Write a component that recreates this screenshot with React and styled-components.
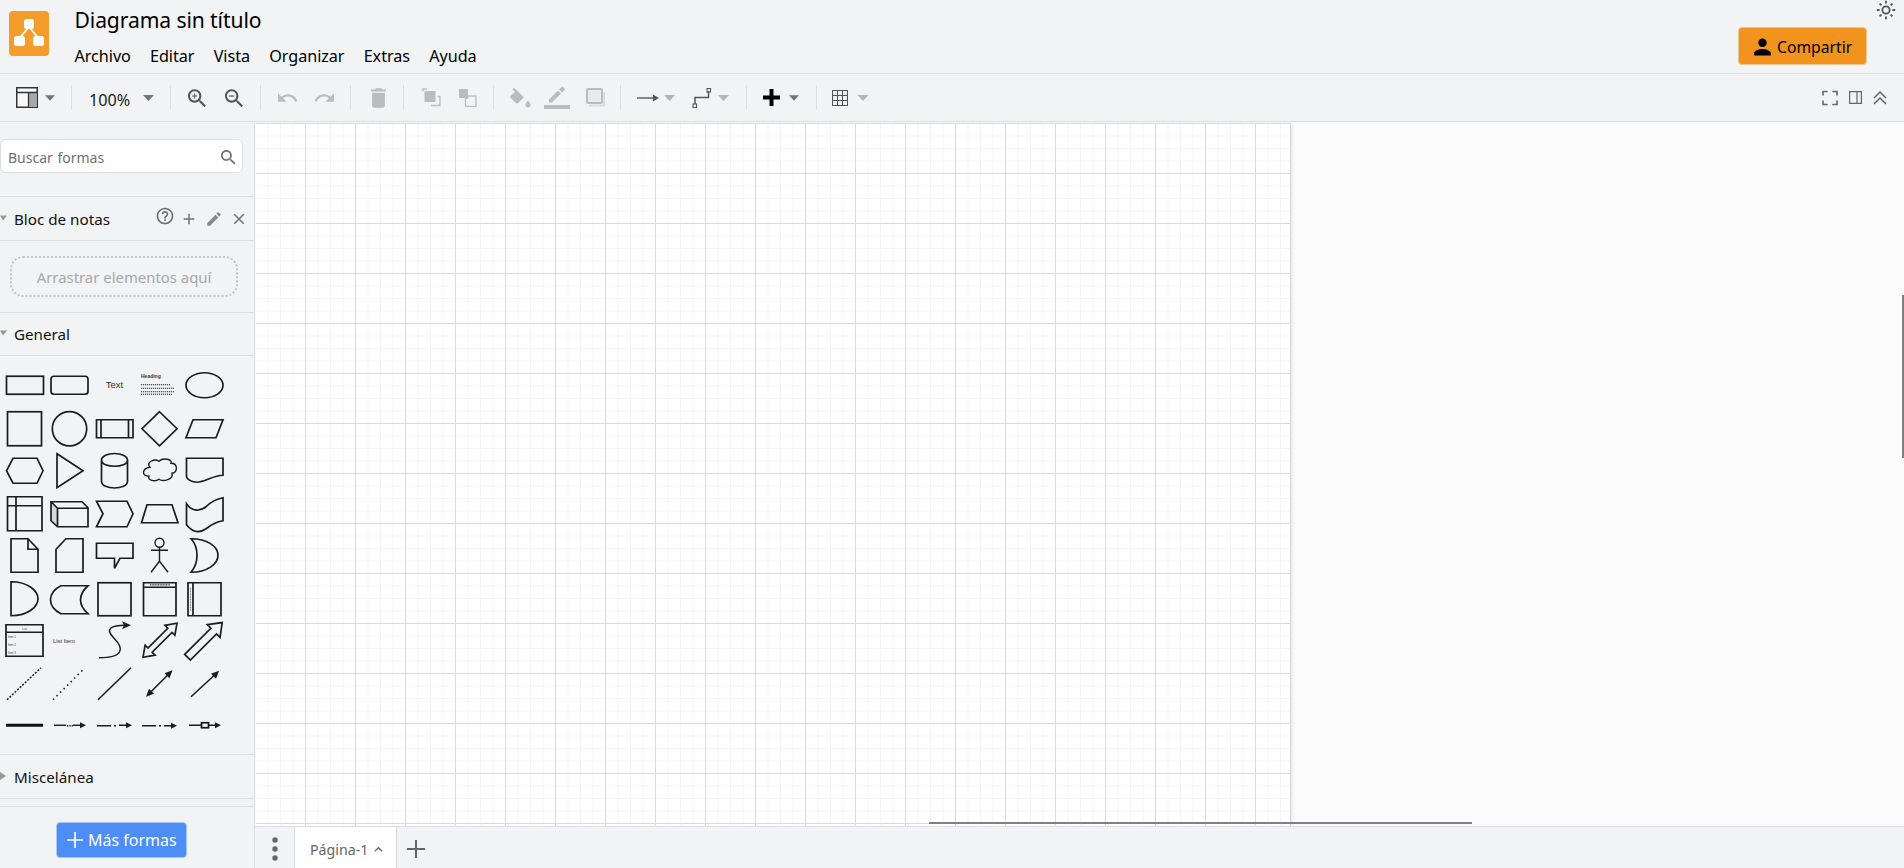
import React from "react";
import styled, { createGlobalStyle } from "styled-components";

const Global = createGlobalStyle`
  html, body { margin: 0; padding: 0; height: 100%; overflow: hidden; }
  body { font-family: "Noto Sans", "Open Sans", sans-serif; color: #000; background: #f1f3f4; }
  #root { height: 100%; }
`;

const Shell = styled.div`display: flex; flex-direction: column; height: 868px; width: 1904px; overflow: hidden; position: relative;`;

/* header */
const Header = styled.header`
  height: 73px; flex: none; display: flex; background: #f1f3f4; border-bottom: 1px solid #dadce0; position: relative; box-sizing: content-box;
`;
const LogoWrap = styled.div`margin: 11px 0 0 9px; width: 40px; height: 45px; flex: none;`;
const TitleCol = styled.div`margin-left: 25.5px; display: flex; flex-direction: column;`;
const Title = styled.div`font-size: 21.1px; line-height: 30px; margin-top: 5px; letter-spacing: -0.1px;`;
const Menu = styled.nav`display: flex; gap: 19.2px; margin-top: 6px;`;
const MenuItem = styled.span`font-size: 16.2px; line-height: 30px; letter-spacing: -0.05px;`;
const HeaderRight = styled.div`margin-left: auto; margin-right: 37px; margin-top: 27px;`;
const ShareButton = styled.button`
  width: 129px; height: 38px; box-sizing: border-box; background: #f2931e; border: 1px solid #e8c79b; border-radius: 4px;
  display: flex; align-items: center; padding: 1px 0 0 14px; gap: 5px; font: inherit; font-size: 15.7px; color: #000; white-space: nowrap;
`;
const ThemeToggle = styled.svg`position: absolute; right: 7px; top: -1px; width: 22px; height: 22px;`;

/* toolbar */
const Toolbar = styled.div`
  height: 47px; flex: none; display: flex; align-items: center; padding-left: 16px; background: #f1f3f4; border-bottom: 1px solid #dadce0;
`;
const Glyph = styled.svg`
  flex: none; width: ${p => p.$w}px; height: ${p => p.$h || p.$w}px; margin-left: ${p => p.$ml || 0}px;
  color: ${p => p.$off ? "#bcbcbc" : p.$c || "#555"}; display: block;
`;
const Sep = styled.span`flex: none; width: 1px; height: 25px; background: #dedfe2; margin-left: ${p => p.$ml}px;`;
const Zoom = styled.span`flex: none; width: 41px; margin-left: ${p => p.$ml}px; font-size: 16.2px; line-height: 24px; position: relative; top: 2px; color: #222; white-space: nowrap;`;

/* body */
const Body = styled.div`flex: 1; display: flex; min-height: 0;`;
const Sidebar = styled.aside`width: 255px; flex: none; box-sizing: border-box; border-right: 1px solid #dadce0; background: #f1f3f4; display: flex; flex-direction: column;`;
const SearchArea = styled.div`height: 75px; flex: none; box-sizing: border-box; padding-top: 17px; border-bottom: 1px solid #dadce0;`;
const SearchBox = styled.div`
  width: 243px; height: 34px; box-sizing: border-box; background: #fff; border: 1px solid #dadce0; border-radius: 5px;
  display: flex; align-items: center; justify-content: space-between; padding: 2px 6px 0 7px; font-size: 14px; color: #707070; word-spacing: 1px;
`;
const SectionHead = styled.div`
  height: ${p => p.$h}px; flex: none; box-sizing: border-box; border-bottom: 1px solid #dadce0; display: flex; align-items: center; position: relative; padding-left: 14px;
  font-size: 15.2px; color: #111;
`;
const Caret = styled.svg`position: absolute; left: 0; top: 50%; margin-top: -5px; width: 8px; height: 8px; color: #999;`;
const HeadIcons = styled.div`position: absolute; left: 0; top: 0; right: 0; bottom: 0; pointer-events: none;`;
const HeadIcon = styled.svg`position: absolute; left: ${p => p.$x}px; top: ${p => p.$y}px; width: ${p => p.$s}px; height: ${p => p.$s}px; color: ${p => p.$c || "#707070"};`;
const DropArea = styled.div`height: 72px; flex: none; box-sizing: border-box; padding: 15px 16px 0 10px; border-bottom: 1px solid #dadce0;`;
const DropBox = styled.div`
  height: 41px; box-sizing: border-box; border: 2px dotted #c4c4c4; border-radius: 13px; display: flex; align-items: center; justify-content: center;
  font-size: 14.9px; color: #a8a8a8;
`;
const Palette = styled.div`
  height: 399px; flex: none; box-sizing: border-box; border-bottom: 1px solid #dadce0; padding: 8px 0 0 2px;
  display: grid; grid-template-columns: repeat(5, 45px); grid-auto-rows: 42.5px;
`;
const CellSvg = styled.svg`width: 45px; height: 42.5px; display: block; overflow: visible;`;
const Spacer = styled.div`height: 8px; flex: none; box-sizing: border-box; border-bottom: 1px solid #dadce0;`;
const SideFooter = styled.div`flex: 1; padding: 15px 0 0 56px;`;
const MoreButton = styled.button`
  width: 131px; height: 36px; box-sizing: border-box; border: 1px solid #a9c6f5; background: #4d8df6; color: #fff; border-radius: 4px;
  display: flex; align-items: center; padding: 0 0 0 10px; gap: 5px; font: inherit; font-size: 16px; white-space: nowrap;
`;

/* canvas */
const Main = styled.main`flex: 1; min-width: 0; display: flex; flex-direction: column;`;
const Canvas = styled.div`flex: 1; min-height: 0; background: #fbfbfb; position: relative; overflow: hidden; padding: 1px 0 0 1px;`;
const Page = styled.div`
  width: 1034px; height: 100%; background-color: #fff; box-shadow: 1px 0 0 #d8d8d8, 3px 0 2px #ececec;
  background-image:
    linear-gradient(to right, #dbdbdb 1px, transparent 1px),
    linear-gradient(to bottom, #dbdbdb 1px, transparent 1px),
    linear-gradient(to right, #f4f4f4 1px, transparent 1px),
    linear-gradient(to bottom, #f4f4f4 1px, transparent 1px);
  background-size: 50px 50px, 50px 50px, 12.5px 12.5px, 12.5px 12.5px;
  background-position: 49px 0, 0 50px, 11.5px 0, 0 0;
`;
const HScroll = styled.div`position: absolute; left: 674px; width: 543px; bottom: 2px; height: 2px; background: #808080;`;
const VScroll = styled.div`position: absolute; right: 0; top: 173px; width: 2px; height: 163px; background: #808080;`;

/* footer */
const Footer = styled.footer`height: 42px; flex: none; box-sizing: border-box; background: #f1f3f4; border-top: 1px solid #dadce0; display: flex; align-items: stretch;`;
const MenuDots = styled.div`width: 39px; flex: none; display: flex; align-items: center; justify-content: center; padding-top: 3px;`;
const Tab = styled.div`
  width: 103px; flex: none; box-sizing: border-box; background: #fff; border: solid #dadce0; border-width: 0 1px; display: flex; align-items: center; padding: 3px 0 0 15px; gap: 6px;
  font-size: 14.2px; color: #666; white-space: nowrap;
`;
const AddPage = styled.div`margin-left: 10px; display: flex; align-items: center; padding-top: 3px;`;

const P = {
  zoomBase: "M15.5 14h-.79l-.28-.27C15.41 12.59 16 11.11 16 9.5 16 5.91 13.09 3 9.5 3S3 5.91 3 9.5 5.91 16 9.5 16c1.61 0 3.09-.59 4.23-1.57l.27.28v.79l5 4.99L20.49 19l-4.99-5zm-6 0C7.01 14 5 11.99 5 9.5S7.01 5 9.5 5 14 7.01 14 9.5 11.99 14 9.5 14z",
  undo: "M12.5 8c-2.65 0-5.05.99-6.9 2.6L2 7v9h9l-3.62-3.62c1.39-1.16 3.16-1.88 5.12-1.88 3.54 0 6.55 2.31 7.6 5.5l2.37-.78C21.08 11.03 17.15 8 12.5 8z",
  redo: "M18.4 10.6C16.55 8.99 14.15 8 11.5 8c-4.65 0-8.58 3.03-9.96 7.22L3.9 16c1.05-3.19 4.05-5.5 7.6-5.5 1.95 0 3.73.72 5.12 1.88L13 16h9V7l-3.6 3.6z",
  trash: "M6 19c0 1.1.9 2 2 2h8c1.1 0 2-.9 2-2V7H6v12zM19 4h-3.5l-1-1h-5l-1 1H5v2h14V4z",
  person: "M12 12c2.21 0 4-1.79 4-4s-1.79-4-4-4-4 1.79-4 4 1.79 4 4 4zm0 2c-2.67 0-8 1.34-8 4v2h16v-2c0-2.66-5.33-4-8-4z",
  help: "M11 18h2v-2h-2v2zm1-16C6.48 2 2 6.48 2 12s4.48 10 10 10 10-4.48 10-10S17.52 2 12 2zm0 18c-4.41 0-8-3.59-8-8s3.59-8 8-8 8 3.59 8 8-3.59 8-8 8zm0-14c-2.21 0-4 1.79-4 4h2c0-1.1.9-2 2-2s2 .9 2 2c0 2-3 1.75-3 5h2c0-2.25 3-2.5 3-5 0-2.21-1.79-4-4-4z",
  edit: "M3 17.25V21h3.75L17.81 9.94l-3.75-3.75L3 17.25zM20.71 7.04c.39-.39.39-1.02 0-1.41l-2.34-2.34c-.39-.39-1.02-.39-1.41 0l-1.83 1.83 3.75 3.75 1.83-1.83z",
  close: "M19 6.41L17.59 5 12 10.59 6.41 5 5 6.41 10.59 12 5 17.59 6.41 19 12 13.41 17.59 19 19 17.59 13.41 12z",
  add: "M19 13h-6v6h-2v-6H5v-2h6V5h2v6h6v2z",
};

const Down = ({ $ml, $w = 11, off }) => (
  <Glyph viewBox="0 0 11 6" $w={$w} $h={6} $ml={$ml} fill="currentColor" $c={off ? "#b4b4b4" : "#757575"}><path d="M0 0h11L5.5 6z" /></Glyph>
);

const Logo = () => (
  <svg viewBox="0 0 40 45" width="40" height="45">
    <rect width="40" height="45" rx="4" fill="#f59d2a" />
    <path d="M20 16 L10.500 27 M20 16 L29.500 27" stroke="#fff" strokeWidth="1.800" />
    <rect x="15" y="8" width="10" height="10" rx="2.500" fill="#fff" />
    <rect x="5" y="25" width="11" height="10" rx="2.500" fill="#fff" />
    <rect x="24" y="25" width="11" height="10" rx="2.500" fill="#fff" />
  </svg>
);

const S = { fill: "none", stroke: "#1c1c1c", strokeWidth: 1.7 };
const H = { fill: "#1c1c1c", stroke: "none" };
const tiny = { fontFamily: "'Liberation Sans', sans-serif", fill: "#333" };

const shapes = [
  <rect x="6.5" y="376" width="37" height="18" {...S} />,
  <rect x="51" y="376" width="37" height="18" rx="3" {...S} />,
  <text x="114.5" y="388" fontSize="9.500" textAnchor="middle" {...tiny}>Text</text>,
  <g>
    <text x="141" y="378" fontSize="5" fontWeight="700" {...tiny}>Heading</text>
    <path d="M141 384.5H170M141 388H174M141 391.5H174M141 394H172" stroke="#222" strokeWidth="1.200" strokeDasharray="1.200 .8" fill="none" />
  </g>,
  <ellipse cx="204.5" cy="385" rx="18.5" ry="12.5" {...S} />,

  <rect x="7.5" y="411" width="34" height="34" {...S} />,
  <circle cx="69.5" cy="428" r="17.2" {...S} />,
  <path d="M96.5 419H133V437H96.5ZM101 419V437M128.5 419V437" {...S} />,
  <path d="M159.5 411L177 428L159.5 445L142 428Z" {...S} />,
  <path d="M193 419H223L216 437H186Z" {...S} />,

  <path d="M13 458H37L43 470.5L37 483H13L6.5 470.5Z" {...S} />,
  <path d="M57 453.5L83 470.5L57 487.5Z" {...S} />,
  <path d="M101.5 460C101.5 451 127.500 451 127.500 460V481C127.500 490 101.500 490 101.500 481ZM101.500 460C101.500 468 127.500 468 127.500 460" {...S} />,
  <path d="M150 467C145 462 155 458 159 461C163 457 173 459 171 463C178 463 178 472 172 473C174 479 163 482 159 479C155 482 147 480 149 476C141 476 142 468 150 467Z" {...S} strokeWidth="1.400" />,
  <path d="M186.500 458H223V475C213 475 205 482 197 482C192 482 186.500 479 186.500 476Z" {...S} />,

  <path d="M7.500 496H42V530H7.500ZM16 496V530M7.500 505H42" {...S} />,
  <g>
    <path d="M51 501L57 507V525L51 519Z" fill="#d8d8d8" stroke="none" />
    <path d="M51 501H82L88 507V526H57.500L51 520ZM57.500 507.500H88M57.500 507.500V526M51 501L57.500 507.500" {...S} />
  </g>,
  <path d="M96.500 500.500H127L133 513L127 526H96.500L103 513Z" {...S} />,
  <path d="M147 504H172L178 522H141.500Z" {...S} />,
  <path d="M186.500 503C192 511 200 511 206 506C211 501 217 498 223 497V520C217 521 211 524 206 528C199 533 192 531 186.500 524Z" {...S} />,

  <path d="M11 538.500H28L38 549V572H11ZM28 538.500V549H38" {...S} />,
  <path d="M66 538.500H83V572H56V549Z" {...S} />,
  <path d="M96.500 543H133V558H120L114.500 568V558H96.500Z" {...S} />,
  <g>
    <circle cx="159.500" cy="542.500" r="4.500" {...S} strokeWidth="1.400" />
    <path d="M159.500 547V561M151 550H168M159.500 561L151 572M159.500 561L168 572" {...S} strokeWidth="1.400" />
  </g>,
  <path d="M191 538.500C207 538.500 218 546 218 555C218 564 207 572 191 572C199 563 199 547 191 538.500Z" {...S} />,

  <path d="M11 581C28 581 38 590 38 598C38 606 28 615 11 615Z" {...S} />,
  <path d="M61 585H88C78 594 78 604 88 613H61C47 606 47 592 61 585Z" {...S} />,
  <rect x="98" y="582" width="33" height="33" {...S} />,
  <g>
    <path d="M143.500 582H176V615H143.500ZM143.500 586.500H176" {...S} />
    <path d="M150 584.200H170" stroke="#222" strokeWidth="1.200" strokeDasharray="1 .6" />
  </g>,
  <g>
    <path d="M188 582H221V615H188ZM193 582V615" {...S} />
    <path d="M190.500 587V610" stroke="#777" strokeWidth="1" strokeDasharray="1 .6" />
  </g>,

  <g>
    <path d="M6 624.500H43V656H6ZM6 632H43" {...S} />
    <text x="24.500" y="630" fontSize="2.800" textAnchor="middle" {...tiny}>List</text>
    <text x="8" y="637.500" fontSize="2.800" {...tiny}>Item 1</text>
    <text x="8" y="645.500" fontSize="2.800" {...tiny}>Item 2</text>
    <text x="8" y="653.500" fontSize="2.800" {...tiny}>Item 3</text>
  </g>,
  <text x="53" y="642.500" fontSize="5.800" {...tiny}>List Item</text>,
  <g>
    <path d="M99 657.500C124 657.500 124 648 114 638C104 628 112 625 125 625" {...S} strokeWidth="1.500" />
    <path d="M131 625L122 621L124 625L122 629Z" {...H} />
  </g>,
  <path transform="translate(160 640) rotate(-45)" d="M-24 0L-14 -7V-3H14V-7L24 0L14 7V3H-14V7Z" {...S} />,
  <path transform="translate(204.500 640) rotate(-45)" d="M-24 -4H13V-9L25 0L13 9V4H-24Z" {...S} />,

  <path d="M7 699L41 667" {...S} strokeWidth="1.500" strokeDasharray="2 1.500" />,
  <path d="M53 699L84 668" {...S} strokeWidth="1.600" strokeDasharray="1.500 3.500" />,
  <path d="M98 699L131 667" {...S} strokeWidth="1.600" />,
  <g>
    <path d="M148 694L170 672" {...S} strokeWidth="1.600" />
    <path d="M146 696L149 688L154 693ZM172.500 669.500L169.500 677.500L164.500 672.500Z" {...H} />
  </g>,
  <g>
    <path d="M191 696L216 673" {...S} strokeWidth="1.600" />
    <path d="M219 670L216 678L211 673Z" {...H} />
  </g>,

  <path d="M6 725H43" fill="none" stroke="#111" strokeWidth="3" />,
  <g>
    <path d="M54 725H66" {...S} strokeWidth="1.400" />
    <path d="M67 725.500H73" {...S} strokeWidth="1.400" strokeDasharray="1 .7" />
    <path d="M73 725H81" {...S} strokeWidth="1.400" />
    <path d="M86 725L80 722V728Z" {...H} />
  </g>,
  <g>
    <path d="M97 725.500H111M114 725.500H116M119 725H127" {...S} strokeWidth="1.400" />
    <path d="M132 725L126 722V728Z" {...H} />
  </g>,
  <g>
    <path d="M142 725.500H156M159 725.500H161M164 725.500H172" {...S} strokeWidth="1.400" />
    <path d="M177 725.500L171 722.500V728.500Z" {...H} />
  </g>,
  <g>
    <path d="M189 725H201M209 725H216" {...S} strokeWidth="1.400" />
    <rect x="201.500" y="722.500" width="7" height="5" fill="none" stroke="#111" strokeWidth="1.700" />
    <path d="M221 725L215 722V728Z" {...H} />
  </g>,
];

const PaletteCell = ({ index, children }) => {
  const col = index % 5;
  const row = Math.floor(index / 5);
  const cx = 24.5 + col * 45;
  const cy = 385 + row * 42.5;
  return <CellSvg viewBox={`${cx - 22.5} ${cy - 21.25} 45 42.5`}>{children}</CellSvg>;
};

const Tri = ({ right }) => (
  <Caret viewBox="0 0 8 8" fill="currentColor"><path d={right ? "M0 0L6 4L0 8Z" : "M0 1.500H7L3 6.500Z"} /></Caret>
);

export default function App() {
  return (
    <Shell>
      <Global />
      <Header>
        <LogoWrap><Logo /></LogoWrap>
        <TitleCol>
          <Title>Diagrama sin título</Title>
          <Menu>
            {["Archivo", "Editar", "Vista", "Organizar", "Extras", "Ayuda"].map(m => <MenuItem key={m}>{m}</MenuItem>)}
          </Menu>
        </TitleCol>
        <HeaderRight>
          <ShareButton>
            <svg viewBox="3 3.500 18 17" width="19" height="18" fill="#000"><path d={P.person} /></svg>
            Compartir
          </ShareButton>
        </HeaderRight>
        <ThemeToggle viewBox="0 0 24 24" fill="none" stroke="#555" strokeWidth="2">
          <circle cx="12" cy="12" r="4" />
          <path d="M12 2v3M12 19v3M2 12h3M19 12h3M5 5l2 2M17 17l2 2M5 19l2-2M17 7l2-2" />
        </ThemeToggle>
      </Header>

      <Toolbar>
        <Glyph viewBox="0 0 22 21" $w={22} $h={21} fill="none">
          <rect x="0.750" y="0.750" width="20.500" height="19.500" stroke="#333" strokeWidth="1.500" fill="#f8f8f8" />
          <path d="M13 5.500H21V20H13Z" fill="#a8a8a8" />
          <path d="M1 5.500H21M12.500 5.500V20" stroke="#333" strokeWidth="1.300" />
        </Glyph>
        <Down $ml={7} $w={10} />
        <Sep $ml={16} />
        <Zoom $ml={17}>100%</Zoom>
        <Down $ml={13} />
        <Sep $ml={16} />
        <Glyph viewBox="3 3 17.500 17" $w={18} $ml={17} fill="currentColor"><path d={P.zoomBase} /><path d="M12 10h-2v2H9v-2H7V9h2V7h1v2h2v1z" /></Glyph>
        <Glyph viewBox="3 3 17.500 17" $w={18} $ml={19} fill="currentColor"><path d={P.zoomBase} /><path d="M7 9h5v1.200H7z" /></Glyph>
        <Sep $ml={17} />
        <Glyph viewBox="2 6 20 11" $w={19} $h={11} $ml={17} $off fill="currentColor"><path d={P.undo} /></Glyph>
        <Glyph viewBox="2 6 20 11" $w={19} $h={11} $ml={18} $off fill="currentColor"><path d={P.redo} /></Glyph>
        <Sep $ml={16} />
        <Glyph viewBox="5 3 14 18" $w={15} $h={20} $ml={20} $off fill="currentColor"><path d={P.trash} /></Glyph>
        <Sep $ml={17} />
        <Glyph viewBox="0 0 19 19" $w={19} $ml={18} $off fill="none" stroke="currentColor" strokeWidth="1.300">
          <path d="M9 17.500H18V8.500H15.500M1 3.500V1H5" />
          <rect x="2.500" y="3" width="11" height="11" fill="currentColor" stroke="none" />
        </Glyph>
        <Glyph viewBox="0 0 19 19" $w={19} $ml={17} $off fill="none" stroke="currentColor" strokeWidth="1.300">
          <rect x="7.500" y="8" width="10.500" height="10.500" />
          <rect x="1" y="1" width="9" height="9" fill="currentColor" stroke="none" />
          <rect x="7.500" y="8" width="3" height="3" fill="currentColor" stroke="none" />
        </Glyph>
        <Sep $ml={16} />
        <Glyph viewBox="0 0 21 20" $w={21} $h={20} $ml={16} $off fill="currentColor">
          <path d="M3.500 0L2.300 1.200L4.800 3.700L0.500 8C0 8.500 0 9.300 0.500 9.800L6 15.300C6.500 15.800 7.300 15.800 7.800 15.300L14 9.200L6 1.500Z" />
          <path d="M18 12.500C18 12.500 15.500 15 15.500 17C15.500 18.400 16.600 19.500 18 19.500C19.400 19.500 20.500 18.400 20.500 17C20.500 15 18 12.500 18 12.500Z" />
        </Glyph>
        <Glyph viewBox="0 0 26 23" $w={26} $h={23} $ml={13} $off fill="currentColor">
          <path d="M5 13.500V16.500H8L17 7.500L14 4.500ZM15 3.500L18 6.500L20.500 4C21 3.500 21 3 20.500 2.500L19 1C18.500 .5 18 .5 17.500 1Z" />
          <rect x="0" y="19" width="26" height="4" />
        </Glyph>
        <Glyph viewBox="0 0 19 19" $w={19} $ml={16} $off fill="none" stroke="currentColor">
          <rect x="1" y="1" width="15" height="14" strokeWidth="2" rx="1" fill="#e9eaec" />
          <path d="M3 17.500H18V4" strokeWidth="2.200" stroke="#dcdcdc" />
        </Glyph>
        <Sep $ml={15} />
        <Glyph viewBox="0 0 22 8" $w={22} $h={8} $ml={16} $c="#555" fill="currentColor"><path d="M0 3.300H17V4.700H0Z" /><path d="M16 0.500L22 4L16 7.500Z" /></Glyph>
        <Down $ml={5} off />
        <Glyph viewBox="0 0 20 20" $w={20} $ml={17} fill="none" stroke="#555" strokeWidth="1.500">
          <path d="M3 16V9.500H16.500V3" />
          <rect x="1" y="16" width="3.500" height="3.500" strokeWidth="1.100" />
          <rect x="15" y="0.500" width="3.500" height="3.500" strokeWidth="1.100" />
        </Glyph>
        <Down $ml={6} off />
        <Sep $ml={17} />
        <Glyph viewBox="0 0 17 17" $w={17} $ml={16} $c="#000" fill="currentColor"><path d="M6.500 0H10.500V6.500H17V10.500H10.500V17H6.500V10.500H0V6.500H6.500Z" /></Glyph>
        <Down $ml={9} $w={10} />
        <Sep $ml={17} />
        <Glyph viewBox="0 0 16 16" $w={16} $ml={15} fill="none" stroke="#555" strokeWidth="1.100">
          <path d="M.5.5H15.500V15.500H.5ZM.5 5.500H15.500M.5 10.500H15.500M5.500.5V15.500M10.500.5V15.500" />
        </Glyph>
        <Down $ml={9} $w={12} off />
        <Glyph viewBox="0 0 16 16" $w={16} $ml={953} fill="none" stroke="#666" strokeWidth="1.600" strokeLinecap="round">
          <path d="M1 5V1.500H5M11 1.500H15V5M15 11V14.500H11M5 14.500H1V11" />
        </Glyph>
        <Glyph viewBox="0 0 13 13" $w={13} $ml={10.500} fill="none" stroke="#666" strokeWidth="1.200">
          <path d="M.6.6H12.400V12.400H.6ZM8 .6V12.400" />
        </Glyph>
        <Glyph viewBox="0 0 14 14" $w={14} $ml={11} fill="none" stroke="#666" strokeWidth="1.500">
          <path d="M1 7L7 1L13 7M1 13L7 7L13 13" />
        </Glyph>
      </Toolbar>

      <Body>
        <Sidebar>
          <SearchArea>
            <SearchBox>
              Buscar formas
              <svg viewBox="3 3 18 18" width="15" height="15" fill="#707070"><path d={P.zoomBase} /></svg>
            </SearchBox>
          </SearchArea>
          <SectionHead $h={44}>
            <Tri />
            Bloc de notas
            <HeadIcons>
              <HeadIcon $x={155} $y={9} $s={20} viewBox="0 0 24 24" fill="currentColor"><path d={P.help} /></HeadIcon>
              <HeadIcon $x={180} $y={13} $s={18} viewBox="0 0 24 24" fill="currentColor"><path d={P.add} /></HeadIcon>
              <HeadIcon $x={205} $y={13} $s={18} $c="#8a8a8a" viewBox="0 0 24 24" fill="currentColor"><path d={P.edit} /></HeadIcon>
              <HeadIcon $x={230} $y={13} $s={18} viewBox="0 0 24 24" fill="currentColor"><path d={P.close} /></HeadIcon>
            </HeadIcons>
          </SectionHead>
          <DropArea>
            <DropBox>Arrastrar elementos aquí</DropBox>
          </DropArea>
          <SectionHead $h={43}>
            <Tri />
            General
          </SectionHead>
          <Palette>
            {shapes.map((s, i) => <PaletteCell key={i} index={i}>{s}</PaletteCell>)}
          </Palette>
          <SectionHead $h={44}>
            <Tri right />
            Miscelánea
          </SectionHead>
          <Spacer />
          <SideFooter>
            <MoreButton>
              <svg viewBox="5 5 14 14" width="16" height="16" fill="#fff"><path d="M19 12.700h-6.300V19h-1.400v-6.300H5v-1.400h6.300V5h1.400v6.300H19z" /></svg>
              Más formas
            </MoreButton>
          </SideFooter>
        </Sidebar>

        <Main>
          <Canvas>
            <Page />
            <HScroll />
            <VScroll />
          </Canvas>
          <Footer>
            <MenuDots>
              <svg viewBox="0 0 6 24" width="6" height="24" fill="#666">
                <circle cx="3" cy="3" r="2.700" /><circle cx="3" cy="12" r="2.700" /><circle cx="3" cy="21" r="2.700" />
              </svg>
            </MenuDots>
            <Tab>
              Página-1
              <svg viewBox="0 0 10 6" width="9" height="6" fill="none" stroke="#666" strokeWidth="1.500"><path d="M1 5.500L5 1.500L9 5.500" /></svg>
            </Tab>
            <AddPage>
              <svg viewBox="0 0 18 18" width="18" height="18" fill="#666"><path d="M8 0H10V8H18V10H10V18H8V10H0V8H8Z" /></svg>
            </AddPage>
          </Footer>
        </Main>
      </Body>
    </Shell>
  );
}
